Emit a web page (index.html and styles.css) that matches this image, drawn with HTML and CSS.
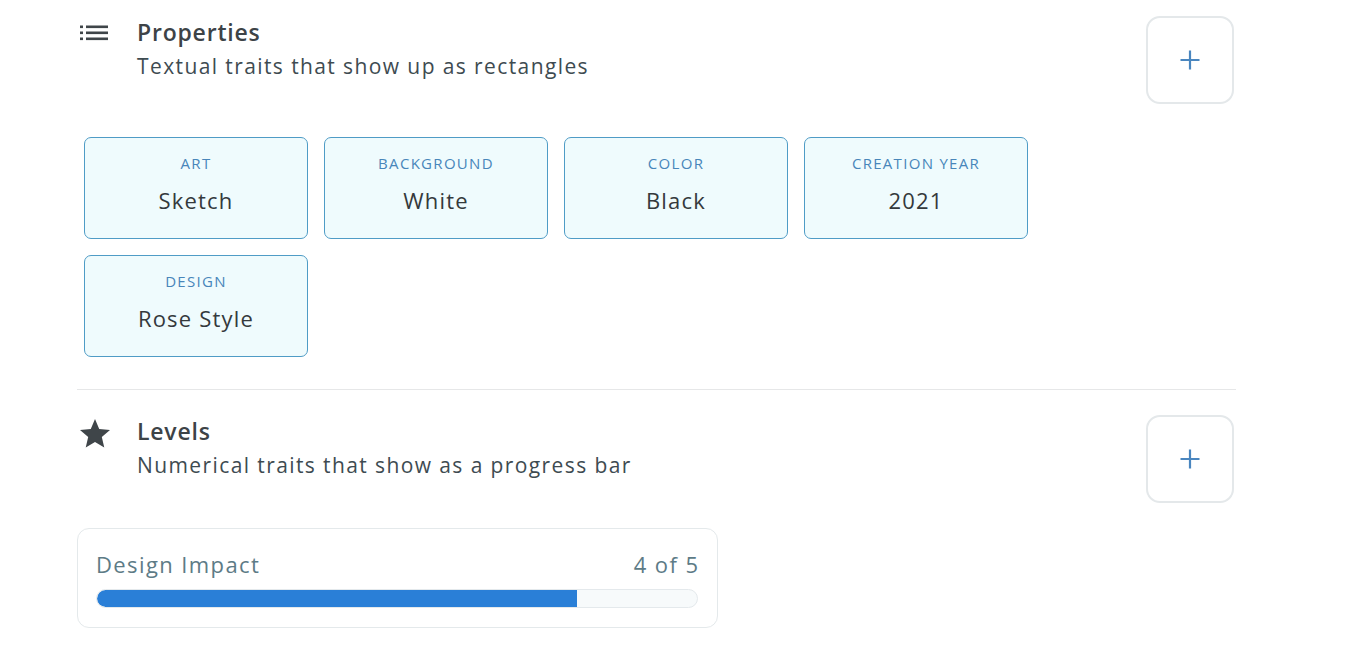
FILE: index.html
```html
<!DOCTYPE html>
<html>
<head>
<meta charset="utf-8">
<link rel="stylesheet" href="styles.css">
</head>
<body>
<div class="page">
  <section class="section">
    <div class="section-head">
      <div class="head-icon">
        <svg width="28" height="17" viewBox="0 0 28 17"><g fill="#3f4549"><rect x="0" y="0.5" width="3" height="2.6"/><rect x="6" y="0.5" width="22" height="2.6"/><rect x="0" y="6.5" width="3" height="2.6"/><rect x="6" y="6.5" width="22" height="2.6"/><rect x="0" y="12.5" width="3" height="2.6"/><rect x="6" y="12.5" width="22" height="2.6"/></g></svg>
      </div>
      <div class="head-text">
        <h2 class="head-title">Properties</h2>
        <p class="head-sub">Textual traits that show up as rectangles</p>
      </div>
      <button class="add-btn" aria-label="Add property">
        <svg width="20" height="20" viewBox="0 0 20 20"><path d="M10 0.5v19M0.5 10h19" stroke="#4a86bf" stroke-width="2.2"/></svg>
      </button>
    </div>
    <div class="props">
      <div class="prop"><div class="prop-type">Art</div><div class="prop-value">Sketch</div></div>
      <div class="prop"><div class="prop-type">Background</div><div class="prop-value">White</div></div>
      <div class="prop"><div class="prop-type">Color</div><div class="prop-value">Black</div></div>
      <div class="prop"><div class="prop-type">Creation Year</div><div class="prop-value">2021</div></div>
      <div class="prop"><div class="prop-type">Design</div><div class="prop-value">Rose Style</div></div>
    </div>
  </section>
  <hr class="divider">
  <section class="section levels-section">
    <div class="section-head">
      <div class="head-icon star-icon">
        <svg width="30" height="29" viewBox="2 2 20 19.3"><path d="M12 17.27L18.18 21l-1.64-7.03L22 9.24l-7.19-.61L12 2 9.19 8.63 2 9.24l5.46 4.73L5.82 21z" fill="#3f4549"/></svg>
      </div>
      <div class="head-text">
        <h2 class="head-title">Levels</h2>
        <p class="head-sub">Numerical traits that show as a progress bar</p>
      </div>
      <button class="add-btn" aria-label="Add level">
        <svg width="20" height="20" viewBox="0 0 20 20"><path d="M10 0.5v19M0.5 10h19" stroke="#4a86bf" stroke-width="2.2"/></svg>
      </button>
    </div>
    <div class="level">
      <div class="level-row">
        <span class="level-name">Design Impact</span>
        <span class="level-count">4 of 5</span>
      </div>
      <div class="bar"><div class="bar-fill" style="width:80%"></div></div>
    </div>
  </section>
</div>
</body>
</html>
```

FILE: styles.css
```css
* { box-sizing: border-box; }
body {
  margin: 0;
  background: #ffffff;
  font-family: "Open Sans", "Noto Sans", sans-serif;
  color: #3e4549;
}
.page {
  width: 1159px;
  margin-left: 77px;
  padding-top: 16px;
}
.section-head {
  display: flex;
  align-items: flex-start;
}
.head-icon {
  width: 60px;
  flex: none;
  padding-left: 3px;
  padding-top: 9px;
  display: flex;
}
.star-icon { padding-top: 4px; }
.head-text { flex: 1; padding-top: 1px; }
.head-title {
  margin: 0;
  font-size: 23px;
  line-height: 30px;
  font-weight: 600;
  letter-spacing: 0.8px;
  color: #3d4347;
}
.head-sub {
  margin: 5px 0 0;
  font-size: 21px;
  line-height: 28px;
  font-weight: 400;
  letter-spacing: 1.4px;
  color: #3e4b51;
}
.add-btn {
  width: 88px;
  height: 88px;
  margin-right: 2px;
  flex: none;
  border: 2px solid #e4e8ea;
  border-radius: 14px;
  background: #fff;
  display: flex;
  align-items: center;
  justify-content: center;
  padding: 0;
}
.props {
  display: grid;
  grid-template-columns: repeat(4, 224px);
  gap: 16px;
  margin-top: 33px;
  margin-left: 7px;
}
.prop {
  height: 102px;
  border: 1px solid #4f9cc6;
  border-radius: 7px;
  background: #effbfd;
  display: flex;
  flex-direction: column;
  align-items: center;
  padding-top: 14px;
}
.prop-type {
  font-size: 15px;
  line-height: 22px;
  letter-spacing: 1.3px;
  text-transform: uppercase;
  color: #4886ba;
}
.prop-value {
  margin-top: 12px;
  font-size: 22px;
  line-height: 28px;
  letter-spacing: 1.2px;
  color: #34393c;
}
.divider {
  border: 0;
  border-top: 1px solid #e6e7e8;
  margin: 32px 0 0;
}
.levels-section { padding-top: 25px; }
.level {
  width: 641px;
  margin-top: 25px;
  border: 1px solid #e4e9eb;
  border-radius: 12px;
  padding: 20px 19px 19px 18px;
}
.level-row {
  display: flex;
  justify-content: space-between;
  font-size: 22px;
  line-height: 30px;
  letter-spacing: 1.4px;
  color: #5d7b86;
}
.level-count { margin-right: -1.4px; }
.bar {
  margin-top: 10px;
  height: 19px;
  border: 1px solid #e4e9ec;
  border-radius: 10px;
  background: #f7fafb;
  overflow: hidden;
}
.bar-fill {
  height: 100%;
  background: #2a7fd7;
  border-radius: 10px 0 0 10px;
}
```
